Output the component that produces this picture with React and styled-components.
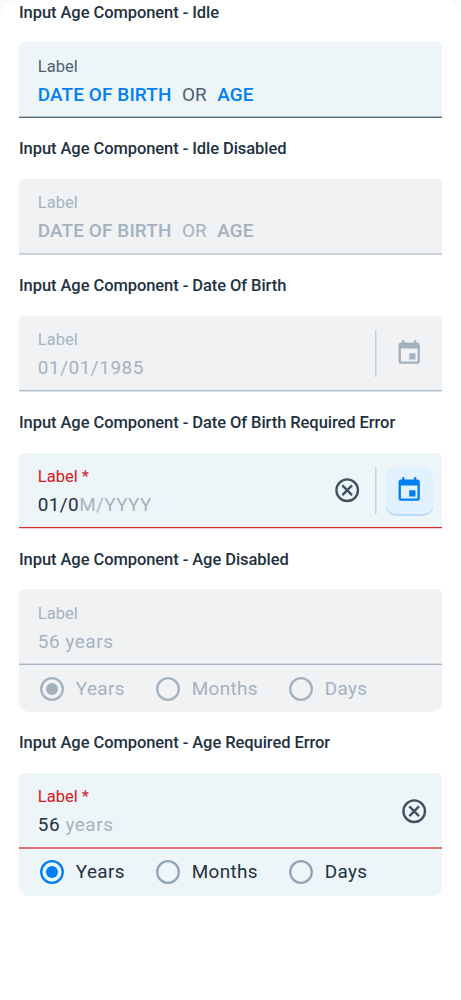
import React from "react";
import styled, { createGlobalStyle } from "styled-components";

const GlobalStyle = createGlobalStyle`
  *, *::before, *::after { box-sizing: border-box; }
  body {
    margin: 0;
    background: #fafafa;
    font-family: Roboto, "Liberation Sans", sans-serif;
  }
`;

const tones = {
  normal: { bg: "#edf5f9", label: "#4f5f6e", text: "#22313f", radio: "#94a3b5", accent: "#0080f0" },
  disabled: { bg: "#f0f2f4", label: "#a6b3c0", text: "#a6b3c0", radio: "#a4b1bf", accent: "#a4b1bf" },
  error: { bg: "#edf5f9", label: "#d41a1a", text: "#22313f", radio: "#94a3b5", accent: "#0080f0" },
};

const Page = styled.main`
  display: flex;
  flex-direction: column;
  gap: 19.2px;
  min-height: 1000px;
  padding: 0.6px 19px 0;
  background: #fff;
  border-radius: 18px 18px 0 0;
`;

const Section = styled.section`
  display: flex;
  flex-direction: column;
  gap: 18px;
`;

const Title = styled.h2`
  margin: 0;
  font-size: 16.5px;
  line-height: 23.6px;
  font-weight: 500;
  letter-spacing: -0.07px;
  color: #22313f;
  white-space: nowrap;
`;

const Panel = styled.div`
  background: ${(p) => tones[p.$tone].bg};
  border-radius: ${(p) => (p.$rounded ? "5px 5px 10px 10px" : "5px 5px 0 0")};
  overflow: hidden;
`;

const Field = styled.div`
  display: flex;
  align-items: flex-start;
  justify-content: space-between;
  height: 76px;
  padding-left: 18.8px;
`;

const Underline = styled.div`
  height: 2px;
  margin-top: -2px;
  border-top: 1px solid ${(p) => p.$top};
  border-bottom: 1px solid ${(p) => p.$bottom};
`;

const Texts = styled.div`
  display: flex;
  flex-direction: column;
  gap: 4px;
  padding-top: 14.5px;
`;

const Label = styled.label`
  font-size: 16.5px;
  line-height: 20px;
  letter-spacing: 0;
  color: ${(p) => tones[p.$tone].label};
`;

const Value = styled.div`
  font-size: 18.9px;
  line-height: 28px;
  letter-spacing: ${(p) => (p.$masked ? "0.42px" : "0.56px")};
  white-space: pre;
  color: ${(p) => tones[p.$tone].text};
`;

const Hint = styled.span`
  color: #a6b3c0;
`;

const Choices = styled.div`
  display: flex;
  gap: 10.5px;
  font-size: 18.9px;
  line-height: 28px;
  letter-spacing: 0.13px;
  color: ${(p) => tones[p.$tone].label};
`;

const Choice = styled.span`
  font-weight: 500;
  color: ${(p) => tones[p.$tone].accent};
`;

const Actions = styled.div`
  display: flex;
  align-items: center;
  height: 75.8px;
  padding-right: ${(p) => (p.$wide ? "13.8px" : "9px")};
`;

const Divider = styled.span`
  width: 2px;
  height: 47px;
  margin: 0 9px 0 13.8px;
  border-left: 1px solid #c8d2da;
  border-right: 1px solid #dce3e8;
`;

const DateButton = styled.button`
  display: flex;
  align-items: center;
  justify-content: center;
  width: 47px;
  height: 47px;
  padding: 0;
  border: 0;
  border-radius: 10px;
  color: ${(p) => (p.$active ? "#0080f0" : "#a4b1bf")};
  background: ${(p) => (p.$active ? "#e1f1ff" : "transparent")};
  box-shadow: ${(p) => (p.$active ? "0 2px 0 #b8dcff" : "none")};
`;

const Icon = styled.svg`
  display: block;
  width: 28.4px;
  height: 28.4px;
`;

const RadioRow = styled.div`
  display: flex;
  align-items: center;
  gap: 30.9px;
  height: 46.8px;
  padding-left: 20.8px;
`;

const RadioOption = styled.label`
  display: flex;
  align-items: center;
  gap: 12px;
  font-size: 18.9px;
  line-height: 28px;
  letter-spacing: 0.36px;
  color: ${(p) => tones[p.$tone].text};
`;

function RadioMark({ checked, tone }) {
  const color = checked ? tones[tone].accent : tones[tone].radio;
  return (
    <svg width="24" height="24" viewBox="0 0 24 24">
      <circle cx="12" cy="12" r="10.8" fill="none" stroke={color} strokeWidth="2.3" />
      {checked && <circle cx="12" cy="12" r="6" fill={color} />}
    </svg>
  );
}

function Radios({ tone }) {
  return (
    <RadioRow>
      {["Years", "Months", "Days"].map((unit, i) => (
        <RadioOption key={unit} $tone={tone}>
          <RadioMark checked={i === 0} tone={tone} />
          {unit}
        </RadioOption>
      ))}
    </RadioRow>
  );
}

function ClearIcon() {
  return (
    <Icon viewBox="0 0 24 24" fill="none" stroke="#405161" strokeWidth="2">
      <circle cx="12" cy="12" r="9.1" />
      <path d="M7.9 7.9l8.2 8.2M16.1 7.9l-8.2 8.2" />
    </Icon>
  );
}

function CalendarIcon() {
  return (
    <Icon viewBox="0 0 24 24" fill="currentColor">
      <path d="M17.3 12h-5.3v5.3h5.3zM16 1v2H8V1H6v2H5c-1.11 0-1.99.9-1.99 2L3 19c0 1.1.89 2 2 2h14c1.1 0 2-.9 2-2V5c0-1.1-.9-2-2-2h-1V1h-2zm3 18H5V8h14v11z" />
    </Icon>
  );
}

function AgeInput({ title, tone, label, line, actions, wide, radios, children }) {
  return (
    <Section>
      <Title>{title}</Title>
      <Panel $tone={tone} $rounded={radios}>
        <Field>
          <Texts>
            <Label $tone={tone}>{label}</Label>
            {children}
          </Texts>
          {actions && <Actions $wide={wide}>{actions}</Actions>}
        </Field>
        <Underline $top={line[0]} $bottom={line[1]} />
        {radios && <Radios tone={tone} />}
      </Panel>
    </Section>
  );
}

function IdleChoices({ tone }) {
  return (
    <Choices $tone={tone}>
      <Choice $tone={tone}>DATE OF BIRTH</Choice>
      <span>OR</span>
      <Choice $tone={tone}>AGE</Choice>
    </Choices>
  );
}

export default function App() {
  return (
    <>
      <GlobalStyle />
      <Page>
        <AgeInput title="Input Age Component - Idle" tone="normal" label="Label" line={["#b0bec7", "#566674"]}>
          <IdleChoices tone="normal" />
        </AgeInput>
        <AgeInput title="Input Age Component - Idle Disabled" tone="disabled" label="Label" line={["#c8d1d9", "#cbd4dc"]}>
          <IdleChoices tone="disabled" />
        </AgeInput>
        <AgeInput
          title="Input Age Component - Date Of Birth"
          tone="disabled"
          label="Label"
          line={["#aebcc8", "#dde3e8"]}
          actions={
            <>
              <Divider />
              <DateButton disabled><CalendarIcon /></DateButton>
            </>
          }
        >
          <Value $tone="disabled">01/01/1985</Value>
        </AgeInput>
        <AgeInput
          title="Input Age Component - Date Of Birth Required Error"
          tone="error"
          label="Label *"
          line={["#d62a27", "#f7cfce"]}
          actions={
            <>
              <ClearIcon />
              <Divider />
              <DateButton $active><CalendarIcon /></DateButton>
            </>
          }
        >
          <Value $tone="error" $masked>01/0<Hint>M/YYYY</Hint></Value>
        </AgeInput>
        <AgeInput title="Input Age Component - Age Disabled" tone="disabled" label="Label" line={["#d3dae1", "#a9b7c4"]} radios>
          <Value $tone="disabled">56 years</Value>
        </AgeInput>
        <AgeInput
          title="Input Age Component - Age Required Error"
          tone="error"
          label="Label *"
          line={["#e27372", "#e27372"]}
          actions={<ClearIcon />}
          wide
          radios
        >
          <Value $tone="error">56 <Hint>years</Hint></Value>
        </AgeInput>
      </Page>
    </>
  );
}
